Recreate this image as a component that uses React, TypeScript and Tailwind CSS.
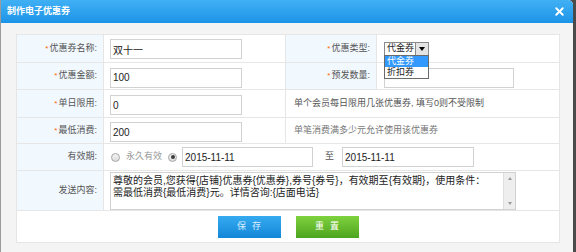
import { X } from "lucide-react";

function Label({ text, star = true }: { text: string; star?: boolean }) {
  return (
    <td className="bg-[#f1f8fe] border border-[#e6e6e6] text-right pr-[6px] text-[9px] text-[#555] whitespace-nowrap">
      {star && <span className="text-[#f60] text-[8px] mr-[1px]">*</span>}
      {text}:
    </td>
  );
}

function TextBox({ value, w = "w-[132px]" }: { value: string; w?: string }) {
  return (
    <input
      readOnly
      value={value}
      className={`${w} h-[20px] border border-[#d2d2d2] bg-white px-[2px] text-[10px] text-[#222] outline-none`}
    />
  );
}

function Radio({ checked }: { checked?: boolean }) {
  return (
    <span className="inline-flex items-center justify-center size-[9px] rounded-full border border-[#a8a8a8] bg-gradient-to-b from-[#f4f4f4] to-[#dcdcdc]">
      {checked && <span className="size-[4px] rounded-full bg-[#3c3c3c]" />}
    </span>
  );
}

export default function App() {
  return (
    <div className="w-[576px] h-[252px] bg-[#4a4a4a] overflow-hidden font-['Liberation_Sans','Noto_Sans_CJK_SC',sans-serif]">
      <div className="w-[573px] h-[262px] bg-[#f4f4f4] rounded-tr-[5px] border-l border-[#9a9a9a] overflow-hidden">
        <div className="h-[23px] flex items-center justify-between pl-[6px] pr-[7px] bg-gradient-to-b from-[#40b0f5] to-[#1b94e7]">
          <span className="text-white text-[9px] font-bold">制作电子优惠券</span>
          <X size={13} strokeWidth={3.5} className="text-white" />
        </div>
        <div className="pl-[15px] pt-[11px]">
          <table className="border-collapse table-fixed w-[543px] bg-white border border-[#dcdcdc]">
            <colgroup>
              <col className="w-[87px]" />
              <col className="w-[182px]" />
              <col className="w-[91px]" />
              <col className="w-[183px]" />
            </colgroup>
            <tbody>
              <tr className="h-[28px]">
                <Label text="优惠券名称" />
                <td className="border border-[#e6e6e6] pl-[6px]">
                  <TextBox value="双十一" />
                </td>
                <Label text="优惠类型" />
                <td className="border border-[#e6e6e6] pl-[7px]">
                  <div className="relative w-[45px]">
                    <div className="flex items-center h-[14px] border border-[#8a8a8a] bg-white">
                      <span className="flex-1 text-[9px] text-[#222] pl-[2px] leading-none">代金券</span>
                      <span className="flex items-center justify-center w-[13px] h-full border-l border-[#8a8a8a] bg-[#e4e4e4]">
                        <span className="w-0 h-0 border-l-[3px] border-r-[3px] border-t-[4px] border-l-transparent border-r-transparent border-t-black" />
                      </span>
                    </div>
                    <div className="absolute left-0 top-[13px] w-[45px] border border-[#6a6a6a] bg-white z-10 text-[9px] leading-[11px]">
                      <div className="bg-[#3399ff] text-white pl-[2px]">代金券</div>
                      <div className="text-[#222] pl-[2px]">折扣券</div>
                    </div>
                  </div>
                </td>
              </tr>
              <tr className="h-[27px]">
                <Label text="优惠金额" />
                <td className="border border-[#e6e6e6] pl-[6px]">
                  <TextBox value="100" />
                </td>
                <Label text="预发数量" />
                <td className="border border-[#e6e6e6] pl-[7px]">
                  <TextBox value="" w="w-[130px]" />
                </td>
              </tr>
              <tr className="h-[28px]">
                <Label text="单日限用" />
                <td className="border border-[#e6e6e6] pl-[6px]">
                  <TextBox value="0" />
                </td>
                <td colSpan={2} className="border border-[#e6e6e6] pl-[8px] text-[9px] text-[#555]">
                  单个会员每日限用几张优惠券, 填写0则不受限制
                </td>
              </tr>
              <tr className="h-[26px]">
                <Label text="最低消费" />
                <td className="border border-[#e6e6e6] pl-[6px]">
                  <TextBox value="200" />
                </td>
                <td colSpan={2} className="border border-[#e6e6e6] pl-[8px] text-[9px] text-[#777]">
                  单笔消费满多少元允许使用该优惠券
                </td>
              </tr>
              <tr className="h-[27px]">
                <Label text="有效期" star={false} />
                <td colSpan={3} className="border border-[#e6e6e6] pl-[7px]">
                  <div className="flex items-center text-[9px]">
                    <Radio />
                    <span className="ml-[6px] text-[#999]">永久有效</span>
                    <span className="ml-[6px]">
                      <Radio checked />
                    </span>
                    <span className="ml-[5px]">
                      <TextBox value="2015-11-11" w="w-[131px]" />
                    </span>
                    <span className="ml-[12px] text-[#555]">至</span>
                    <span className="ml-[8px]">
                      <TextBox value="2015-11-11" w="w-[132px]" />
                    </span>
                  </div>
                </td>
              </tr>
              <tr className="h-[40px]">
                <Label text="发送内容" star={false} />
                <td colSpan={3} className="border border-[#e6e6e6] pl-[6px]">
                  <div className="flex w-[406px] h-[38px] border border-[#d2d2d2] bg-white">
                    <div className="flex-1 px-[2px] pt-[2px] text-[10px] leading-[12px] text-[#222] whitespace-nowrap overflow-hidden">
                      <div>尊敬的会员,您获得{"{店铺}"}优惠券{"{优惠券}"},券号{"{券号}"}，有效期至{"{有效期}"}，使用条件：</div>
                      <div>需最低消费{"{最低消费}"}元。详情咨询:{"{店面电话}"}</div>
                    </div>
                    <div className="w-[12px] flex flex-col justify-between items-center py-[4px] bg-[#eeeeee] border-l border-[#dedede]">
                      <span className="w-0 h-0 border-l-[2px] border-r-[2px] border-b-[3px] border-l-transparent border-r-transparent border-b-[#999]" />
                      <span className="w-0 h-0 border-l-[2px] border-r-[2px] border-t-[3px] border-l-transparent border-r-transparent border-t-[#999]" />
                    </div>
                  </div>
                </td>
              </tr>
              <tr className="h-[32px]">
                <td colSpan={4} className="border border-[#e6e6e6]">
                  <div className="flex justify-center gap-[15px]">
                    <button className="w-[63px] h-[22px] bg-gradient-to-b from-[#35aaf0] to-[#1287d8] text-[#d8eeff] text-[9px] tracking-[6px] pl-[6px]">
                      保存
                    </button>
                    <button className="w-[63px] h-[22px] bg-gradient-to-b from-[#7fd23e] to-[#4da41f] text-white text-[9px] tracking-[6px] pl-[6px]">
                      重置
                    </button>
                  </div>
                </td>
              </tr>
            </tbody>
          </table>
        </div>
      </div>
    </div>
  );
}
